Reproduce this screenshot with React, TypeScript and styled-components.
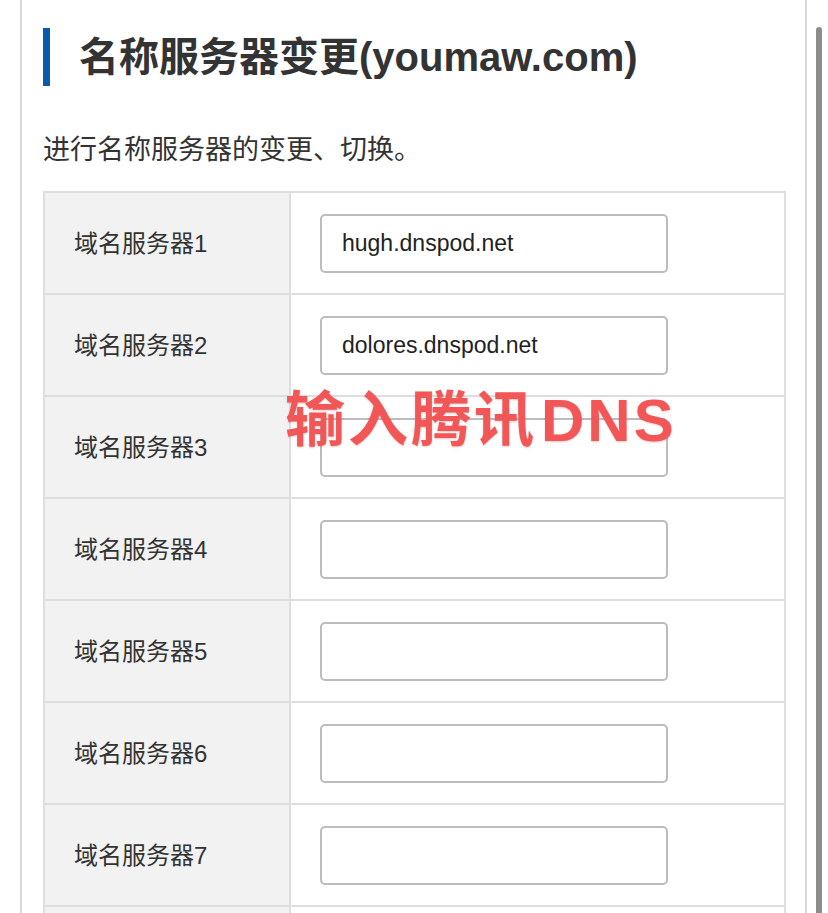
import React from "react";
import styled, { createGlobalStyle } from "styled-components";

const Global = createGlobalStyle`
  html, body { margin: 0; padding: 0; background: #fff; }
  body { font-family: "Liberation Sans", "Noto Sans CJK SC", sans-serif; color: #333; }
`;

const Page = styled.div`
  position: relative;
  width: 828px;
  height: 913px;
  overflow: hidden;
  background: #fff;
`;

const Panel = styled.div`
  margin-left: 20px;
  width: 787px;
  min-height: 913px;
  box-sizing: border-box;
  border-left: 2px solid #d8d8d8;
  border-right: 2px solid #d8d8d8;
  padding: 28px 19px 0 21px;
`;

const Heading = styled.h1`
  margin: 0;
  height: 58px;
  border-left: 7px solid #0b5aab;
  padding-left: 29px;
  font-size: 40px;
  line-height: 58px;
  font-weight: bold;
  color: #333;
  white-space: nowrap;
`;

const Lead = styled.p`
  margin: 45px 0 0;
  font-size: 27px;
  line-height: 38px;
  color: #333;
`;

const Table = styled.div`
  margin-top: 22px;
  width: 743px;
  border: 2px solid #dedede;
  border-bottom: none;
  box-sizing: border-box;
`;

const Row = styled.div`
  display: grid;
  grid-template-columns: 246px 1fr;
  height: 102px;
  border-bottom: 2px solid #dedede;
  box-sizing: border-box;
`;

const Label = styled.div`
  display: flex;
  align-items: center;
  background: #f2f2f2;
  border-right: 2px solid #dedede;
  padding-left: 29px;
  padding-bottom: 3px;
  font-size: 24px;
  color: #333;
`;

const Field = styled.div`
  display: flex;
  align-items: center;
  padding-left: 29px;
`;

const Input = styled.input`
  width: 348px;
  height: 59px;
  box-sizing: border-box;
  border: 2px solid #bcbcbc;
  border-radius: 5px;
  padding: 0 0 0 20px;
  font-family: "Liberation Sans", "Noto Sans CJK SC", sans-serif;
  font-size: 23px;
  color: #222;
  background: #fff;
  outline: none;
`;

const Stamp = styled.div`
  position: absolute;
  left: 285px;
  top: 381px;
  font-size: 60px;
  line-height: 80px;
  font-weight: bold;
  letter-spacing: 3px;
  color: #f25656;
  white-space: nowrap;
  text-shadow: 0 1px 2px rgba(160, 40, 40, 0.25);
`;

const Latin = styled.span`
  margin-left: 4px;
`;

const ScrollThumb = styled.div`
  position: absolute;
  left: 816px;
  top: 27px;
  width: 6px;
  height: 920px;
  border-radius: 3px;
  background: #8c8c8c;
`;

const values = ["hugh.dnspod.net", "dolores.dnspod.net", "", "", "", "", "", ""];

export default function App() {
  return (
    <Page>
      <Global />
      <Panel>
        <Heading>名称服务器变更(youmaw.com)</Heading>
        <Lead>进行名称服务器的变更、切换。</Lead>
        <Table>
          {values.map((v, i) => (
            <Row key={i}>
              <Label>域名服务器{i + 1}</Label>
              <Field>
                <Input defaultValue={v} />
              </Field>
            </Row>
          ))}
        </Table>
      </Panel>
      <Stamp>
        输入腾讯<Latin>DNS</Latin>
      </Stamp>
      <ScrollThumb />
    </Page>
  );
}
